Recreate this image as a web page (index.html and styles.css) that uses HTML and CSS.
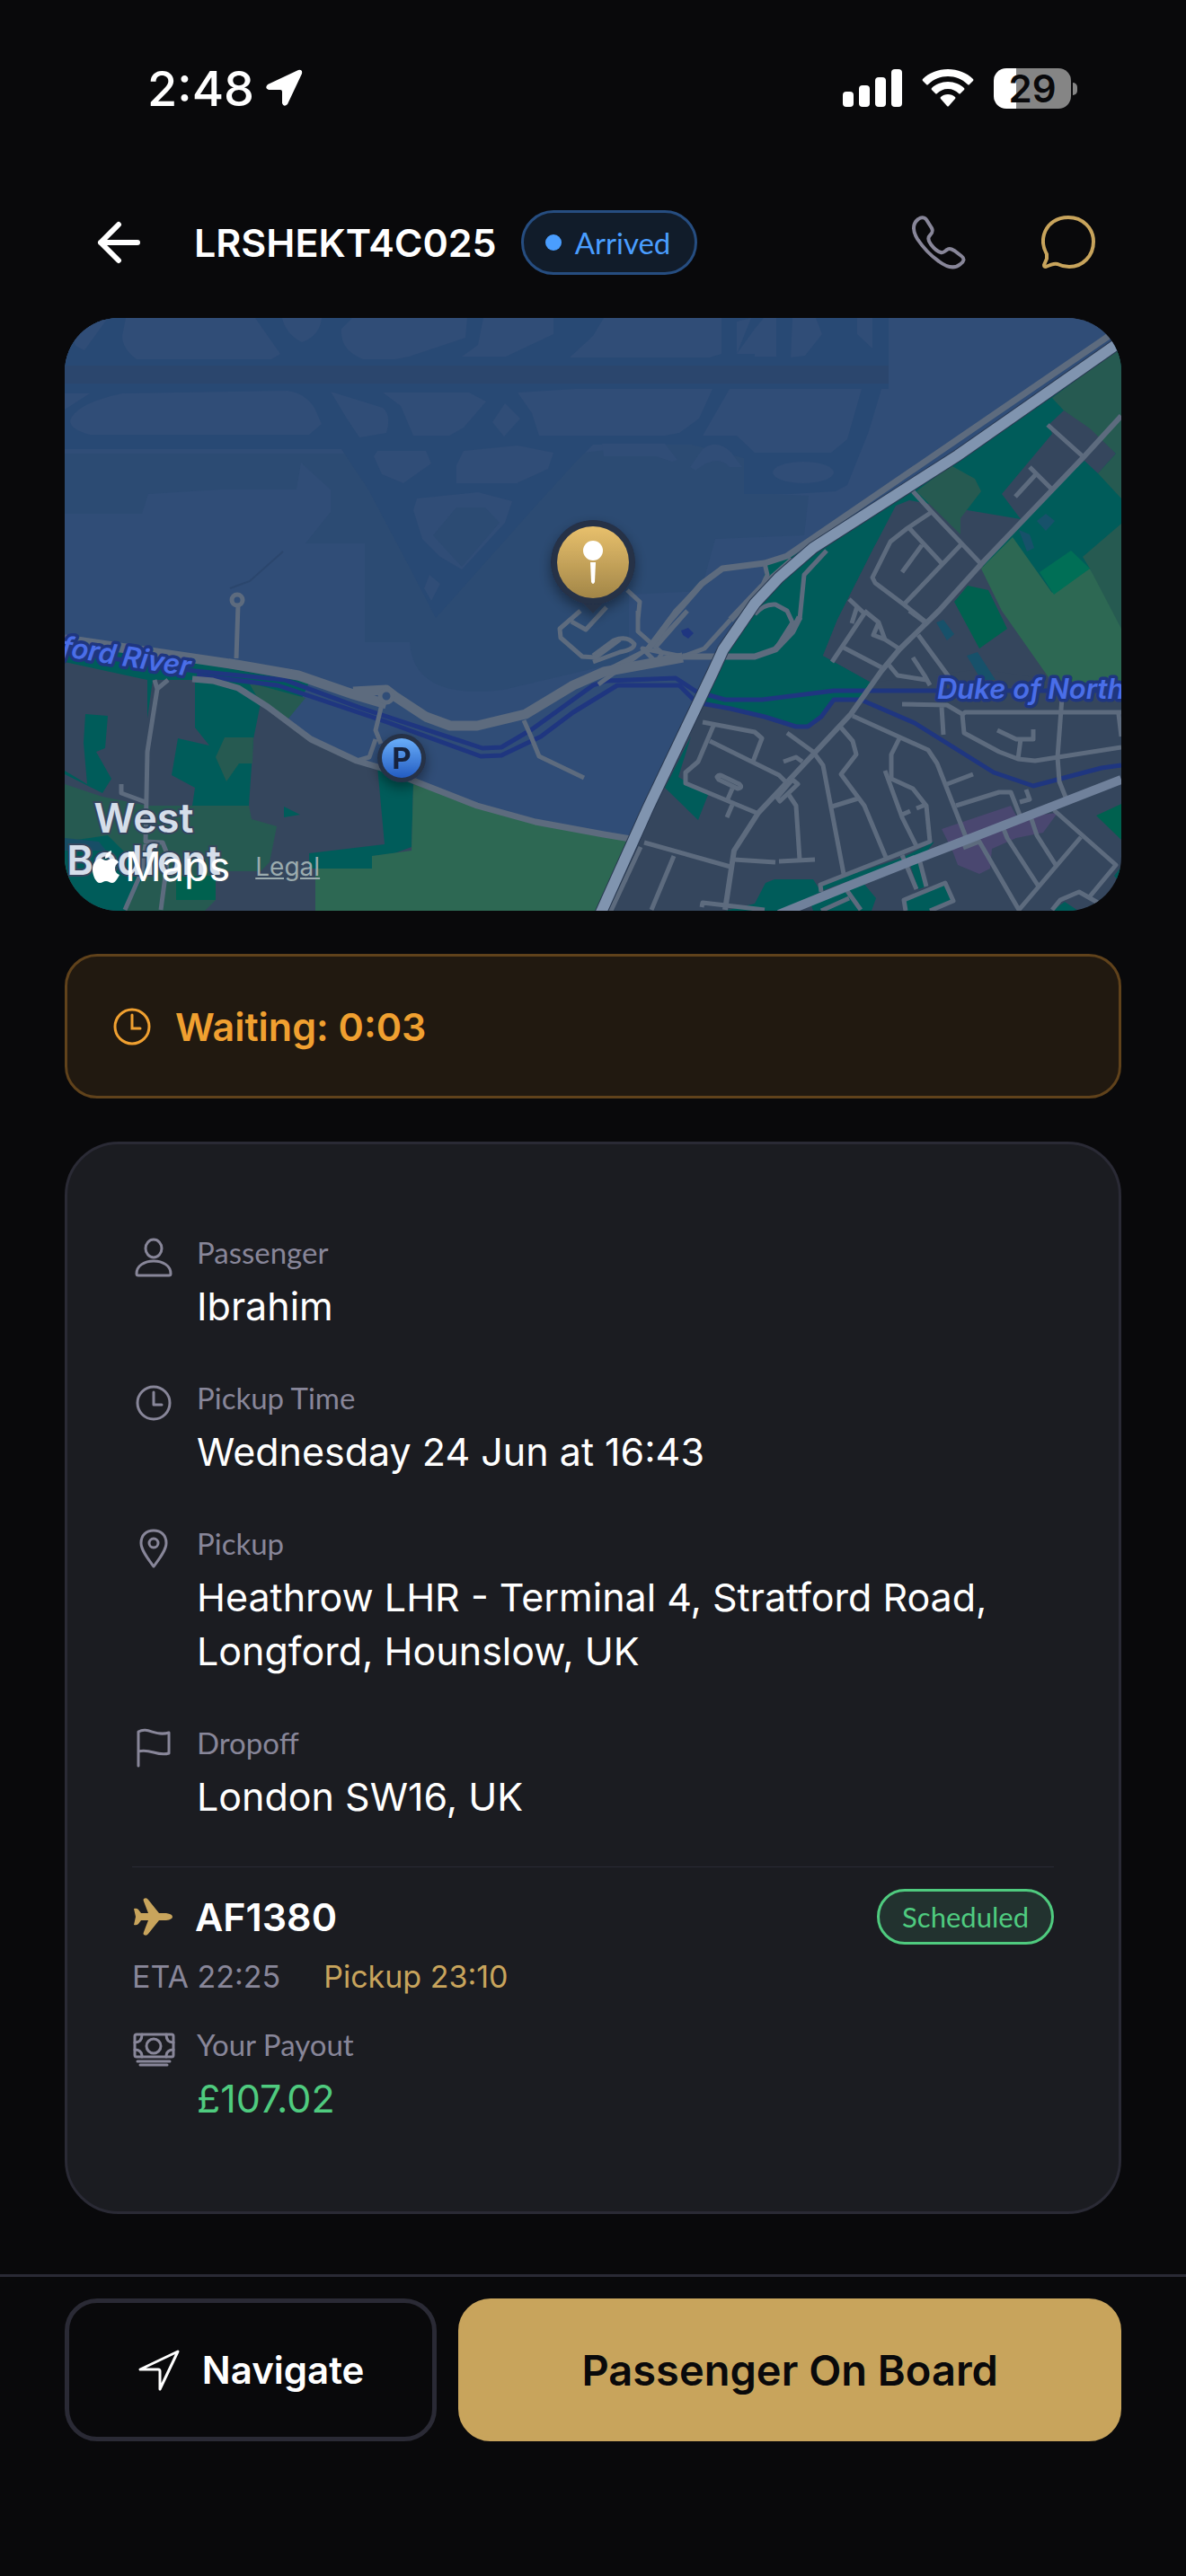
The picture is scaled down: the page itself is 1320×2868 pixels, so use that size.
FILE: index.html
```html
<!DOCTYPE html>
<html lang="en">
<head>
  <meta charset="UTF-8">
  <meta name="viewport" content="width=device-width, initial-scale=1.0">
  <title>Job LRSHEKT4C025</title>
  <link rel="stylesheet" href="styles.css">
</head>
<body>
  <div class="status-bar">
    <div class="status-left">
      <span class="status-time">2:48</span>
      <svg class="status-arrow" viewBox="0 0 42 42"><path d="M37 1 L3 17 Q-1 21 4 23 H17 Q19 23 19 25 V38 Q21 43 25 39 L41 5 Q42 0 37 1 Z" fill="#fff"/></svg>
    </div>
    <div class="status-right">
      <svg class="signal" viewBox="0 0 66 42" fill="#fff">
        <rect x="0" y="25" width="12" height="17" rx="4"/>
        <rect x="18" y="18" width="12" height="24" rx="4"/>
        <rect x="36" y="9" width="12" height="33" rx="4"/>
        <rect x="54" y="0" width="12" height="42" rx="4"/>
      </svg>
      <svg class="wifi" viewBox="0 0 58 42" fill="#fff">
        <path d="M29 0 C18 0 8 4 1 11 Q0 12 1 13 L5 17 Q6 18 7 17 C13 11 21 8 29 8 C37 8 45 11 51 17 Q52 18 53 17 L57 13 Q58 12 57 11 C50 4 40 0 29 0 Z"/>
        <path d="M29 14 C22 14 15 17 11 21 Q10 22 11 23 L15 27 Q16 28 17 27 C20 24 24 22 29 22 C34 22 38 24 41 27 Q42 28 43 27 L47 23 Q48 22 47 21 C43 17 36 14 29 14 Z"/>
        <path d="M29 28 C26 28 23 29 21 31 Q20 32 21 33 L28 41 Q29 42 30 41 L37 33 Q38 32 37 31 C35 29 32 28 29 28 Z"/>
      </svg>
      <div class="battery"><span class="battery-level">29</span></div>
    </div>
  </div>

  <header class="job-header">
    <button type="button" class="icon-button back-button" aria-label="Back">
      <svg viewBox="0 0 48 48"><path d="M24 4 L4 24 L24 44 M4 24 H45" fill="none" stroke="#fff" stroke-width="6" stroke-linecap="round" stroke-linejoin="round"/></svg>
    </button>
    <h1>LRSHEKT4C025</h1>
    <span class="status-pill">Arrived</span>
    <div class="header-actions">
      <button type="button" class="icon-button" aria-label="Call passenger">
        <svg viewBox="0 0 60 60"><path d="M7 4 C11 1 15 2 17 6 L22 14 C24 18 22 20 20 22 C17 25 18 28 21 32 C24 36 28 40 32 41 C35 42 36 40 39 38 C41 36 44 37 47 39 L55 45 C59 48 58 51 54 54 C47 60 38 57 30 51 C20 44 12 35 6 26 C1 18 0 9 7 4 Z" fill="none" stroke="#888699" stroke-width="4"/></svg>
      </button>
      <button type="button" class="icon-button" aria-label="Message passenger">
        <svg viewBox="0 0 60 60"><path d="M6 43 C2 36 1 28 3 21 C7 8 18 2 30 2 C46 2 58 14 58 29 C58 45 46 57 31 57 C26 57 22 56 18 54 C15 53 13 54 10 55 L5 57 Q3 57 3 55 L6 48 Z" fill="none" stroke="#c8a45c" stroke-width="4" stroke-linejoin="round"/></svg>
      </button>
    </div>
  </header>

  <main class="content">
    <div class="map">
      <svg class="map-canvas" viewBox="72 354 1176 660" preserveAspectRatio="xMidYMid slice">
        <defs>
          <linearGradient id="gold" x1="0" y1="0" x2="0" y2="1"><stop offset="0" stop-color="#e8c06c"/><stop offset="1" stop-color="#a28648"/></linearGradient>
          <linearGradient id="parking" x1="0" y1="0" x2="0" y2="1"><stop offset="0" stop-color="#69aefa"/><stop offset="1" stop-color="#235cc1"/></linearGradient>
          <filter id="shadow" x="-50%" y="-50%" width="200%" height="200%"><feDropShadow dx="0" dy="6" stdDeviation="7" flood-opacity="0.4"/></filter>
        </defs>

        <!-- built-up area -->
        <rect x="72" y="354" width="1176" height="660" fill="#35465d"/>

        <!-- airport -->
        <path d="M72 354 H1248 V370 L1240 385 L905 610 L840 670 L794 747 L702 932 L596 915 L531 897 L455 867 L346 823 L321 800 L344 760 L72 710 Z" fill="#304d77"/>
        <path d="M72 505 H340 L380 505 L640 505 L860 480 L860 550 L900 552 L895 596 L796 600 L780 658 L700 662 V735 L560 768 Q460 780 456 715 H406 V605 H340 L368 570 V545 L335 515 L330 545 L245 545 L165 550 L158 572 L72 572 Z" fill="#2c4b73"/>
        <path d="M72 354 H989 V433 H981 L967 480 L943 540 L930 547 L880 550 L828 550 V510 L770 495 L660 495 L640 515 L590 570 L485 688 L455 630 L410 545 L380 500 H72 Z" fill="#284974"/>
        <path d="M86 386 C76 380 90 360 104 354 H120 L94 390 Z M140 354 H284 L312 394 L302 400 H152 Q136 388 136 374 Z M314 354 H358 Q356 374 336 381 Q318 372 314 354 Z M392 354 H520 L518 376 L455 397 L440 400 H404 Q378 390 380 366 Z M538 354 H616 V372 L563 397 H514 L532 384 Z M672 354 H803 V394 L790 398 H634 L660 374 Z M836 354 L820 394 V358 Z M840 366 V394 H820 Z M850 354 H864 V397 H840 V366 Z M882 354 H908 L915 372 L896 396 L880 398 Z M954 354 H971 V388 L954 372 Z" fill="#304d77"/>
        <path d="M72 438 H100 L72 456 Z M136 438 L320 435 Q340 438 350 454 L358 472 L344 484 H100 Q72 476 80 464 Q90 448 136 438 Z M368 436 L426 454 Q436 462 430 482 L400 487 L386 466 Z M426 437 H522 L541 447 L516 476 L500 485 H460 L446 452 Z M562 449 L579 466 L561 486 L548 470 Z M576 437 L640 433 H793 L778 466 L756 482 L740 485 H600 L592 460 Z M812 433 H959 L943 489 L925 504 H840 L820 485 H782 Z M420 502 H474 L480 516 L449 538 L425 528 L416 508 Z M516 502 L576 496 L616 504 L610 522 L575 538 H508 V518 Z M670 494 H740 L754 512 L748 514 L730 508 H672 Z M782 500 Q798 488 814 504 L826 520 L812 520 Q798 504 774 524 L768 520 Z" fill="#304d77"/>
        <ellipse cx="894" cy="526" rx="34" ry="12" fill="#304d77"/>
        <path d="M464 555 L532 548 L570 558 L562 582 L514 634 L490 620 L470 600 L460 568 Z M478 640 L490 650 L480 669 L472 655 Z" fill="#304d77"/>
        <path d="M508 565 H540 L556 582 L514 631 L482 596 Z" fill="#2c4b73"/>
        <rect x="72" y="407" width="917" height="20" fill="#2b466d"/>
        <path d="M315 614 L278 647 L256 655" fill="none" stroke="#2b466d" stroke-width="2"/>

        <!-- parks and fields -->
        <g fill="#005c5a">
          <path d="M1248 370 L1240 385 L905 610 L867 643 L840 670 L794 747 L782 785 L836 795 L886 810 L899 810 L913 800 L928 778 L958 780 L970 760 L916 730 L932 690 L974 607 L1012 557 L1136 578 L1092 633 L1171 690 H1248 Z"/>
          <path d="M853 628 L895 608 L848 655 Z"/>
          <path d="M72 712 L344 760 L336 777 L290 783 L282 823 L277 897 L248 897 L240 915 L214 897 L217 877 L191 863 L198 822 L233 830 L217 810 V757 L170 757 L164 800 V757 L72 737 Z"/>
          <path d="M95 795 L120 797 L117 833 L107 837 L124 867 L114 883 L72 862 V858 L97 873 L93 827 Z"/>
          <path d="M420 853 L428 940 L344 950 V967 H414 L416 953 L439 950 L458 943 L460 873 Z M316 898 L334 907 L316 910 Z"/>
          <path d="M769 820 L740 877 L777 913 L788 885 L755 865 Z M852 983 L862 979 H905 L914 993 L870 1014 H807 L840 1006 Z M903 1008 L943 990 L960 982 L975 1000 L970 1014 H905 Z M1006 1002 L1052 983 L1061 1003 L1035 1014 H1008 Z M1012 960 L1022 958 L1031 987 L1022 990 Z M1004 955 L1040 937 L1030 950 L914 992 L916 984 Z M1171 1014 L1185 1004 L1200 1014 Z M1248 965 L1240 975 L1248 985 Z"/>
        </g>
        <g fill="#265a51">
          <path d="M1171 443 L1245 388 H1248 V555 L1222 527 L1242 505 L1211 478 L1184 457 Z"/>
          <path d="M1058 518 L1085 533 L1092 547 L1069 577 V595 L1020 547 Z"/>
          <path d="M277 760 L340 777 L321 800 L290 783 Z M250 821 H282 L281 850 L266 850 L252 870 L240 843 Z"/>
          <path d="M72 873 L114 887 L164 897 H277 L280 912 L308 920 L300 960 L290 970 H240 V1002 L228 1014 H130 L120 990 L72 990 Z"/>
        </g>
        <path d="M1184 457 L1213 477 L1242 505 L1222 527 L1207 513 L1136 578 L1115 550 L1171 483 L1167 473 Z M1012 557 L1037 567 L1092 628 L1171 757 L1092 745 L970 760 L916 730 L932 690 L974 607 L997 563 Z" fill="#35465d"/>
        <path d="M72 937 L120 930 L140 950 L160 975 L140 1014 H72 Z" fill="#005c5a"/>
        <path d="M72 933 L110 937 L118 947 H72 Z" fill="#174e66"/>
        <path d="M460 873 L531 897 L596 915 L702 932 L668 1014 H351 V967 H414 V953 L458 947 Z" fill="#2d6853"/>
        <path d="M1092 633 L1127 598 L1171 660 L1213 633 L1248 690 V763 L1169 757 L1115 680 Z" fill="#2d6853"/>
        <path d="M1248 583 L1205 620 L1213 633 L1248 700 Z" fill="#265a51"/>
        <path d="M1192 613 L1213 633 L1173 662 L1157 637 Z" fill="#006f56"/>
        <path d="M1062 670 L1077 652 L1100 657 L1121 700 L1090 722 Z M1220 908 L1248 895 V935 Z M196 975 H240 V1002 H196 Z" fill="#00614f"/>
        <path d="M1164 572 L1174 580 L1164 591 L1154 580 Z M1134 590 L1146 595 L1151 610 L1143 614 Z M1042 693 L1050 690 L1062 706 L1054 713 Z M1076 730 L1088 726 L1108 757 L1092 757 Z" fill="#17516a"/>
        <path d="M1048 923 L1125 897 L1132 910 L1177 905 L1161 927 L1131 933 L1104 945 L1102 967 L1090 973 L1066 963 L1060 947 Z" fill="#4a4770"/>

        <!-- rivers -->
        <g fill="none" stroke="#1f3680" stroke-width="5" stroke-linejoin="round">
          <path d="M72 725 L217 747 L317 757 L401 788 L537 833 L558 832 L592 812 L660 763 L675 758 L752 755 L775 770 L807 779 L848 779 L928 769 H1248"/>
          <path d="M219 752 L309 763 L428 803 L535 842 L558 841 L602 820 L638 793 L687 763 H756 L775 782 L813 789 L851 798 L886 809 H899 L914 798 L928 779 H958 L1018 805 L1106 860 L1150 875 L1226 855 L1248 852"/>
        </g>
        <path d="M758 702 L766 699 L772 705 L766 711 L760 707 Z" fill="#1f3680"/>

        <!-- streets -->
        <g fill="none" stroke="#5d6b7e" stroke-width="5" stroke-linejoin="round">
          <path d="M1248 463 L1205 510 L1092 628 L1045 680 L1001 723 L981 747 L947 795 L905 840 L844 905 L817 947 L807 1013" stroke-width="6"/>
          <path d="M782 804 L840 815 L848 822 L838 848 M794 808 L777 848 L763 860 V872 L842 905 M790 825 L867 863 L874 870"/>
          <path d="M876 816 L905 837 L916 852 L939 973 M936 810 L949 825 L953 840 L936 862 L962 897 L987 957"/>
          <path d="M949 797 L1033 835 L1043 850 L1075 932 M1001 822 L992 840 V867 L1016 878 L1031 897 L1035 937 L913 985 L914 993"/>
          <path d="M985 858 L1004 910 L1020 942 M1004 907 L1013 903 M1020 900 L1030 896 M1054 873 L1083 862 M1064 897 L1112 882 H1125 L1136 910"/>
          <path d="M1004 784 L1054 785 L1071 795 L1073 816 L1112 837 L1133 845 L1152 847 L1248 832 M1071 796 L1074 793 H1248 M1245 795 L1248 820 M1182 777 L1177 843 L1179 870 L1187 890 M1048 787 L1050 818"/>
          <path d="M1110 813 L1131 823 H1150 V812 M1136 823 L1133 845 M1022 707 L1066 767 M989 740 L999 752 L1031 757 M1016 732 L1029 752 L1035 763 M1012 680 L1031 694"/>
          <path d="M937 720 L981 743 M926 737 L962 683 L945 667 M962 680 L978 693 L985 712 L1002 723 M978 693 L972 707 L985 712 M954 675 L948 694"/>
          <path d="M1016 547 L1037 570 L1092 628 M1037 570 L1010 588 L991 603 L971 643 L974 649 L1006 673 L1031 693 M1069 607 L1006 673 M1012 588 L1048 627 M1026 607 L1004 637"/>
          <path d="M1166 473 L1205 508 M1146 520 L1171 545 M1153 528 L1130 553"/>
          <path d="M717 938 L813 965 M750 953 L725 1013 M713 943 L679 1016 M817 957 L863 960 M867 959 L907 957 M890 957 L886 897 L878 885 M1072 944 L1090 937 L1134 1013 L1203 932 M1117 923 L1121 933 L1156 987 M1148 912 L1154 930 L1175 963"/>
          <path d="M1173 902 L1242 963 L1213 998 M1171 1013 L1180 1002 L1201 993 L1222 1005 M1008 1014 L1006 1002 L1052 983 L1061 1003 L1035 1014 M1024 960 L1031 987 M1004 952 L1020 990 M781 1010 L782 1005 L851 1013"/>
          <path d="M798 865 Q800 862 804 864 L823 873 Q827 877 821 878 L800 868 Z M815 878 L809 892 M815 896 L809 910 M865 888 L882 868 L888 873 L868 892 Z M943 992 L958 1013 M1135 893 L1146 890 L1142 879 M926 898 L955 889 M872 848 L886 843 L893 848 M914 1014 L945 1000"/>
          <path d="M265 673 L263 733 M135 873 V883 L162 893 M172 757 L175 767 L187 757 M175 767 L164 837 L162 937 L181 938 L187 953 L179 1013 M162 940 L158 970 L139 1013 M426 780 L418 813 L424 828 M418 823 L411 843 L397 847 M583 802 L591 820 L600 842 L650 866"/>
          <circle cx="264" cy="668" r="6"/>
          <path d="M851 627 L854 640 L848 653 M920 613 L895 640 L890 690 M840 684 Q850 672 863 673 L876 680 L882 693 L863 723 M710 690 L712 670 L698 657 M710 680 V703 L737 727 L731 737"/>
          <path d="M660 730 L683 713 Q698 707 706 717 Q706 723 690 726 L660 737 M660 754 L721 723 L752 680 L781 650 M666 762 L737 710 L765 680 M813 690 L784 722 L760 731 L715 722 L731 738 M730 720 L765 680"/>
          <path d="M646 680 L623 700 L624 710 L648 731 L663 732 L690 712 M636 692 L652 701 L675 676"/>
        </g>
        <g fill="none" stroke="#5d6b7e" stroke-width="7" stroke-linejoin="round">
          <path d="M1240 370 L876 619 L851 627 L804 633 L781 650 L746 690 L721 723"/>
          <path d="M882 623 L848 653 L813 690"/>
          <path d="M214 756 L237 758 L265 766 L298 787 L346 823 L397 847 L424 855 L531 897 L596 915 L672 929 L702 934"/>
        </g>
        <g fill="none" stroke="#5d6b7e" stroke-width="11" stroke-linejoin="round">
          <path d="M72 712 L263 740 L332 752 L393 773 L430 784 M393 770 L430 768 L439 775 L474 798 L501 808 H531 L585 795 L638 763 L672 748 L760 732"/>
          <path d="M760 731 H840 L863 723 L882 703 L890 687" stroke-width="7"/>
        </g>
        <circle cx="430" cy="775" r="7" fill="#304d77" stroke="#5d6b7e" stroke-width="5"/>

        <!-- main roads -->
        <path d="M1248 868 L1081 933 L1016 958 L943 987 L867 1018" fill="none" stroke="#70819b" stroke-width="10"/>
        <path d="M1252 377 L1066 507 L905 610 L867 643 L840 672 L805 723 L794 747 L721 900 L668 1018" fill="none" stroke="#2a3a52" stroke-width="14"/>
        <path d="M1252 377 L1066 507 L905 610 L867 643 L840 672 L805 723 L794 747 L721 900 L668 1018" fill="none" stroke="#8094af" stroke-width="12"/>

        <text class="river-label" x="66" y="731" transform="rotate(9 72 735)">ford River</text>
        <text class="river-label" x="1043" y="778">Duke of North</text>
        <text class="place-label" x="160" y="927" text-anchor="middle">West</text>
        <text class="place-label" x="160" y="974" text-anchor="middle">Bedfont</text>

        <g filter="url(#shadow)">
          <circle cx="447" cy="844" r="27" fill="#253047"/>
          <circle cx="447" cy="844" r="22" fill="url(#parking)"/>
          <text class="parking-label" x="447" y="856" text-anchor="middle">P</text>
        </g>
        <g filter="url(#shadow)">
          <path d="M643 666 L660 683 L677 666 Z" fill="#253047"/>
          <circle cx="660" cy="626" r="47" fill="#253047"/>
          <circle cx="660" cy="626" r="40" fill="url(#gold)"/>
        </g>
        <circle cx="660" cy="613" r="11" fill="#fff"/>
        <path d="M657 626 H663 L662 648 Q660 652 658 648 Z" fill="#fff"/>
      </svg>
      <div class="map-credit">
        <svg viewBox="0 0 30 36" fill="#fff"><path d="M21 0 C21 5 18 8 14 9 C14 4 17 1 21 0 Z M15 11 C17 11 19 9 22 9 C25 9 27 10 29 13 C23 17 24 25 30 27 C28 31 25 36 22 36 C19 36 18 34 15 34 C12 34 11 36 8 36 C4 36 0 28 0 21 C0 14 4 9 9 9 C11 9 13 11 15 11 Z"/></svg>
        <span class="map-brand">Maps</span>
        <a href="#">Legal</a>
      </div>
    </div>

    <div class="waiting-banner">
      <svg class="waiting-icon" viewBox="0 0 48 48"><circle cx="24" cy="24" r="19"/><path d="M24 11 V26 H33"/></svg>
      <span>Waiting: 0:03</span>
    </div>

    <section class="job-card">
      <dl class="job-details">
        <div class="detail-row">
          <svg class="detail-icon" viewBox="0 0 48 48"><ellipse cx="24" cy="14" rx="9" ry="10"/><path d="M5 42 C5 33 14 28 24 28 C34 28 43 33 43 42 Q43 44 41 44 H7 Q5 44 5 42 Z"/></svg>
          <dt>Passenger</dt>
          <dd>Ibrahim</dd>
        </div>
        <div class="detail-row">
          <svg class="detail-icon" viewBox="0 0 48 48"><circle cx="24" cy="24" r="18"/><path d="M24 12 V26 H33"/></svg>
          <dt>Pickup Time</dt>
          <dd>Wednesday 24 Jun at 16:43</dd>
        </div>
        <div class="detail-row">
          <svg class="detail-icon" viewBox="0 0 48 48"><path d="M24 44 C18 36 10 26 10 18 C10 9 16 4 24 4 C32 4 38 9 38 18 C38 26 30 36 24 44 Z"/><circle cx="24" cy="18" r="5"/></svg>
          <dt>Pickup</dt>
          <dd>Heathrow LHR - Terminal 4, Stratford Road, Longford, Hounslow, UK</dd>
        </div>
        <div class="detail-row">
          <svg class="detail-icon" viewBox="0 0 48 48"><path d="M7 44 V6 C18 0 26 12 41 7 V30 C28 34 20 24 7 28"/></svg>
          <dt>Dropoff</dt>
          <dd>London SW16, UK</dd>
        </div>
      </dl>

      <div class="flight">
        <div class="flight-top">
          <svg class="flight-icon" viewBox="0 0 48 48"><path d="M13 4 Q16 2 18 5 L30 20 H38 Q45 21 45 24 Q45 27 38 28 H30 L18 43 Q16 46 13 44 Q12 43 13 41 L18 28 H10 L7 32 Q5 34 2 33 L4 24 L2 15 Q5 14 7 16 L10 20 H18 L13 7 Q12 5 13 4 Z" fill="#c8a45c"/></svg>
          <h2>AF1380</h2>
          <span class="flight-badge">Scheduled</span>
        </div>
        <div class="flight-times">
          <span>ETA 22:25</span>
          <span class="flight-pickup">Pickup 23:10</span>
        </div>
      </div>

      <dl class="job-details">
        <div class="detail-row">
          <svg class="detail-icon" viewBox="0 0 48 48"><rect x="3" y="7" width="43" height="25" rx="2"/><ellipse cx="24" cy="20" rx="8" ry="8"/><path d="M3 16 Q11 16 11 7 M38 7 Q38 16 46 16 M3 24 Q11 24 11 32 M38 32 Q38 24 46 24 M6 37 H42 M9 41 H39"/></svg>
          <dt>Your Payout</dt>
          <dd class="payout">£107.02</dd>
        </div>
      </dl>
    </section>
  </main>

  <footer class="action-bar">
    <button type="button" class="navigate-button">
      <svg viewBox="0 0 48 48"><path d="M45 3 L3 23 H23 Q25 23 25 25 V45 Z" fill="none" stroke="#fff" stroke-width="3" stroke-linejoin="round"/></svg>
      Navigate
    </button>
    <button type="button" class="primary-button">Passenger On Board</button>
  </footer>
</body>
</html>
```
FILE: styles.css
```css
* {
  box-sizing: border-box;
  margin: 0;
  padding: 0;
}

body {
  font-family: Inter, 'Liberation Sans', sans-serif;
  background: #09090b;
  color: #fff;
  min-height: 100vh;
  display: flex;
  flex-direction: column;
}

button {
  font-family: inherit;
  cursor: pointer;
}

/* Status bar */
.status-bar {
  display: flex;
  justify-content: space-between;
  align-items: center;
  height: 132px;
  padding: 64px 120px 0 164px;
}

.status-left,
.status-right {
  display: flex;
  align-items: center;
}

.status-left {
  gap: 12px;
}

.status-right {
  gap: 22px;
}

.status-time {
  font-size: 54px;
  font-weight: 500;
}

.status-arrow {
  width: 42px;
  height: 42px;
}

.signal {
  width: 66px;
  height: 42px;
}

.wifi {
  width: 58px;
  height: 42px;
}

.battery {
  position: relative;
  width: 86px;
  height: 45px;
  margin-right: 8px;
  border-radius: 14px;
  background: linear-gradient(90deg, #fff 29%, #858585 29%);
  text-align: center;
}

.battery::after {
  content: '';
  position: absolute;
  left: 88px;
  top: 16px;
  width: 5px;
  height: 14px;
  border-radius: 0 5px 5px 0;
  background: #858585;
}

.battery-level {
  color: #09090b;
  font-size: 42px;
  line-height: 45px;
  font-weight: 600;
}

/* Header */
.job-header {
  display: flex;
  align-items: center;
  padding: 102px 95px 48px 96px;
}

.icon-button {
  width: 72px;
  height: 72px;
  border: none;
  background: none;
  display: flex;
  align-items: center;
  justify-content: center;
}

.icon-button svg {
  width: 60px;
  height: 60px;
}

.back-button svg {
  width: 48px;
  height: 48px;
}

.job-header h1 {
  margin-left: 48px;
  font-size: 43px;
  font-weight: 600;
}

.status-pill {
  display: flex;
  align-items: center;
  gap: 15px;
  height: 72px;
  margin-left: 27px;
  padding: 0 27px 0 24px;
  border: 3px solid #264d80;
  border-radius: 36px;
  background: #111c2a;
  color: #4a9eff;
  font-family: Lato, sans-serif;
  font-size: 33px;
}

.status-pill::before {
  content: '';
  width: 18px;
  height: 18px;
  border-radius: 50%;
  background: #4a9eff;
}

.header-actions {
  display: flex;
  gap: 72px;
  margin-left: auto;
}

/* Content */
.content {
  display: flex;
  flex-direction: column;
  gap: 48px;
  padding: 0 72px;
}

.map {
  position: relative;
  height: 660px;
  border-radius: 60px;
  overflow: hidden;
}

.map-canvas {
  display: block;
  width: 100%;
  height: 100%;
}

.river-label {
  font-size: 31px;
  font-weight: 600;
  font-style: italic;
  fill: #4a6ee8;
  stroke: #1f3680;
  stroke-width: 7px;
  stroke-linejoin: round;
  paint-order: stroke;
}

.place-label {
  font-size: 45px;
  font-weight: 600;
  fill: #d5deea;
  stroke: #35465d;
  stroke-width: 4px;
  paint-order: stroke;
}

.parking-label {
  font-size: 33px;
  font-weight: 700;
  fill: #14233c;
}

.map-credit {
  position: absolute;
  left: 31px;
  bottom: 22px;
  display: flex;
  align-items: center;
  gap: 6px;
}

.map-credit svg {
  width: 30px;
  height: 36px;
}

.map-brand {
  font-size: 45px;
  line-height: 54px;
}

.map-credit a {
  margin-left: 22px;
  color: #9babae;
  font-size: 28px;
}

.waiting-banner {
  display: flex;
  align-items: center;
  gap: 24px;
  height: 161px;
  padding: 0 48px;
  border: 3px solid #60421b;
  border-radius: 36px;
  background: #211910;
  color: #f0a030;
  font-size: 43px;
  font-weight: 600;
}

.waiting-icon {
  width: 48px;
  height: 48px;
  fill: none;
  stroke: #f0a030;
  stroke-width: 3px;
  stroke-linecap: round;
}

.job-card {
  padding: 72px;
  border: 3px solid #2a2a35;
  border-radius: 60px;
  background: #1b1c21;
}

.detail-row {
  display: grid;
  grid-template-columns: 48px 1fr;
  gap: 6px 24px;
  padding: 24px 0;
}

.detail-icon {
  grid-row: span 2;
  width: 48px;
  height: 48px;
  margin-top: 6px;
  fill: none;
  stroke: #888699;
  stroke-width: 3px;
  stroke-linecap: round;
  stroke-linejoin: round;
}

.detail-row dt {
  color: #888699;
  font-family: Lato, sans-serif;
  font-size: 33px;
  line-height: 48px;
}

.detail-row dd {
  font-size: 43px;
  line-height: 60px;
}

.detail-row .payout {
  color: #4fcb7f;
}

.flight {
  margin-top: 24px;
  padding-top: 24px;
  border-top: 1px solid #2a2a35;
}

.flight-top {
  display: flex;
  align-items: center;
}

.flight-icon {
  width: 48px;
  height: 48px;
}

.flight-top h2 {
  margin-left: 22px;
  font-size: 43px;
  font-weight: 600;
}

.flight-badge {
  height: 62px;
  margin-left: auto;
  padding: 0 25px;
  border: 3px solid #4fcb7f;
  border-radius: 31px;
  background: #22322f;
  color: #4fcb7f;
  font-family: Lato, sans-serif;
  font-size: 31px;
  line-height: 56px;
}

.flight-times {
  display: flex;
  gap: 48px;
  margin-top: 9px;
  color: #888699;
  font-size: 34px;
  line-height: 54px;
}

.flight-pickup {
  color: #c8a45c;
}

/* Bottom actions */
.action-bar {
  display: flex;
  gap: 24px;
  margin-top: 67px;
  padding: 24px 72px 150px;
  border-top: 3px solid #2a2a35;
}

.action-bar button {
  display: flex;
  align-items: center;
  justify-content: center;
  height: 159px;
  border: 5px solid #2a2a35;
  border-radius: 36px;
  font-weight: 600;
}

.action-bar .navigate-button {
  flex: 5;
  gap: 24px;
  background: none;
  color: #fff;
  font-size: 42px;
}

.navigate-button svg {
  width: 48px;
  height: 48px;
}

.action-bar .primary-button {
  flex: 9;
  border-color: #c8a45c;
  background: #c8a45c;
  color: #09090b;
  font-size: 47px;
}
```
